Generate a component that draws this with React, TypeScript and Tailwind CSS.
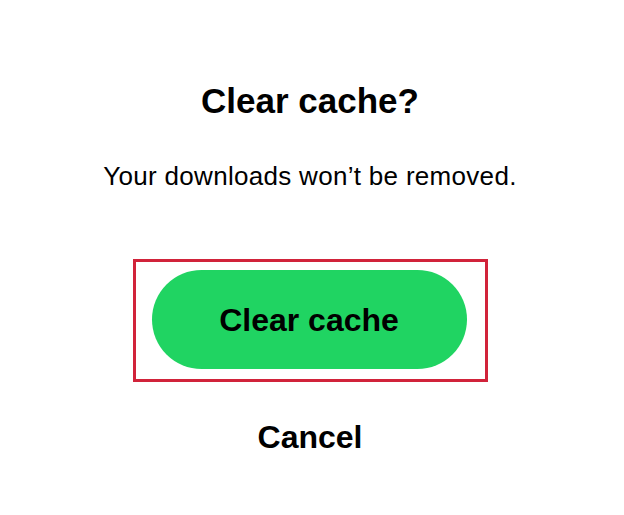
import React from "react";

export default function App() {
  return (
    <div className="w-[624px] h-[515px] bg-white flex flex-col items-center pr-[4px] font-['Liberation_Sans',Arial,sans-serif] text-black">
      <h1 className="mt-[81px] text-[35px] leading-[40px] font-bold">Clear cache?</h1>
      <p className="mt-[40px] text-[26px] leading-[30px] tracking-[0.3px]">
        Your downloads won’t be removed.
      </p>

      {/* highlighted primary action */}
      <div className="mt-[68px] border-[3px] border-[#d1233a] pl-[16px] pr-[18px] pt-[8px] pb-[10px]">
        <button className="w-[315px] h-[99px] rounded-full bg-[#20d462] text-[32px] font-bold flex items-center justify-center">
          Clear cache
        </button>
      </div>

      <button className="mt-[37px] text-[32px] leading-[36px] font-bold">Cancel</button>
    </div>
  );
}
